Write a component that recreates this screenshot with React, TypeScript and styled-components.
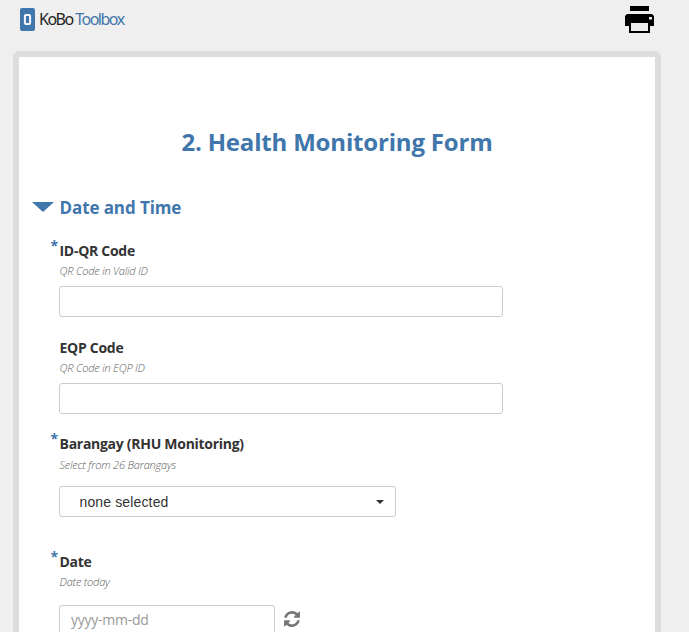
import React from "react";
import styled, { createGlobalStyle } from "styled-components";

const blue = "#3f76ab";

const GlobalStyle = createGlobalStyle`
  *, *::before, *::after { box-sizing: border-box; }
  html, body { margin: 0; height: 100%; overflow: hidden; }
  body { background: #efefef; color: #333; font-family: "Open Sans", sans-serif; }
`;

const Page = styled.div`
  width: 689px;
  height: 632px;
  overflow: hidden;
  background: #efefef;
`;

const Header = styled.header`
  display: flex;
  justify-content: space-between;
  align-items: flex-start;
  height: 51px;
  padding: 6px 35px 0 20px;
`;

const Brand = styled.div`
  display: flex;
  align-items: center;
  height: 26px;
  padding-top: 1px;
`;

const BrandName = styled.span<{ $color: string; $gap: number }>`
  margin: -1px 0 0 ${(p) => p.$gap}px;
  color: ${(p) => p.$color};
  font-family: "Noto Sans", "Open Sans", sans-serif;
  font-size: 16px;
  line-height: 20px;
  letter-spacing: -1.5px;
`;

const PrintButton = styled.button`
  display: block;
  padding: 0;
  border: 0;
  background: none;
  svg { display: block; }
`;

const Paper = styled.main`
  width: 648px;
  height: 640px;
  margin-left: 13px;
  border: 6px solid #ddd;
  border-radius: 6px;
  background: #fff;
`;

const Title = styled.h1`
  margin: 0;
  padding-top: 68px;
  color: ${blue};
  font-size: 24px;
  font-weight: 700;
  line-height: 34px;
  letter-spacing: -0.18px;
  text-align: center;
`;

const SectionTitle = styled.h2`
  display: flex;
  align-items: center;
  height: 24px;
  margin: 37px 0 21px;
  padding-left: 13px;
  gap: 5.500px;
  color: ${blue};
  font-size: 17px;
  font-weight: 700;
  line-height: 24px;
  letter-spacing: -0.1px;
`;

const Arrow = styled.span`
  margin-top: -3px;
  border: 10px solid transparent;
  border-width: 10px 11px 0;
  border-top-color: ${blue};
`;

const Fields = styled.form`
  padding-left: 40px;
`;

const Field = styled.section<{ $after?: number }>`
  margin-bottom: ${(p) => p.$after ?? 0}px;
`;

const Label = styled.label`
  position: relative;
  display: block;
  padding-left: 0.5px;
  color: #333;
  font-size: 14px;
  font-weight: 700;
  line-height: 20px;
  letter-spacing: -0.28px;
`;

const Required = styled.span`
  position: absolute;
  left: -8.500px;
  top: -5px;
  color: ${blue};
  font-size: 14px;
  font-weight: 700;
`;

const Hint = styled.p<{ $before?: number; $after: number }>`
  margin: ${(p) => p.$before ?? 0}px 0 ${(p) => p.$after}px 0.5px;
  color: #5c5c5c;
  font-size: 11px;
  font-style: italic;
  font-weight: 300;
  line-height: 20px;
  letter-spacing: -0.2px;
`;

const TextInput = styled.input<{ $width: number }>`
  display: block;
  width: ${(p) => p.$width}px;
  height: 31px;
  padding: 0 11px;
  border: 1px solid #ccc;
  border-radius: 3px;
  outline: 0;
  background: #fff;
  font: 14px "Open Sans", sans-serif;
  letter-spacing: -0.25px;
  &::placeholder { color: #999; opacity: 1; }
`;

const DateInput = styled(TextInput)`
  padding-bottom: 2px;
`;

const Select = styled.button`
  display: flex;
  align-items: center;
  justify-content: space-between;
  width: 337px;
  height: 31px;
  padding: 0 11px 0 19.500px;
  border: 1px solid #ccc;
  border-radius: 3px;
  background: #fff;
  color: #333;
  font: 14px/20px "Liberation Sans", Arial, sans-serif;
  letter-spacing: 0.14px;
`;

const Caret = styled.span`
  border: 4px solid transparent;
  border-top-color: #333;
  border-bottom: 0;
`;

const DateRow = styled.div`
  display: flex;
  align-items: flex-start;
  gap: 9px;
  svg { margin-top: 6px; }
`;

const LogoMark = () => (
  <svg width="15" height="23" viewBox="0 0 15 23">
    <rect width="15" height="23" rx="2" fill={blue} />
    <rect x="4.9" y="7" width="5.2" height="9" rx="1" fill={blue} stroke="#f5f8fb" strokeWidth="2" />
  </svg>
);

const PrintIcon = () => (
  <svg width="29" height="27" viewBox="0 0 29 27">
    <path d="M5 0h19v5H5z" />
    <path d="M2 8h25l2 2v10h-4v7H4v-7H0V10z" />
    <path d="M6 17h17v8H6z" fill="#efefef" />
    <path d="M24 11h3v2.5h-3z" fill="#efefef" />
  </svg>
);

const RefreshIcon = () => (
  <svg width="16" height="16" viewBox="0 0 1536 1536" fill="#777">
    <path d="M1511 928q0 5-1 7-64 268-268 434.500T764 1536q-146 0-282.500-55T238 1324l-129 129q-19 19-45 19t-45-19-19-45V960q0-26 19-45t45-19h448q26 0 45 19t19 45-19 45l-137 137q71 66 161 102t187 36q134 0 250-65t186-179q11-17 53-117 8-23 30-23h192q13 0 22.500 9.500t9.500 22.500zm25-800v448q0 26-19 45t-45 19h-448q-26 0-45-19t-19-45 19-45l138-138Q969 256 768 256q-134 0-250 65T332 500q-11 17-53 117-8 23-30 23H50q-13 0-22.500-9.500T18 608v-7q65-268 270-434.500T768 0q146 0 284 55.500T1297 212l130-129q19-19 45-19t45 19 19 45z" />
  </svg>
);

export default function App() {
  return (
    <Page>
      <GlobalStyle />
      <Header>
        <Brand>
          <LogoMark />
          <BrandName $color="#222" $gap={4}>KoBo</BrandName>
          <BrandName $color={blue} $gap={2.5}>Toolbox</BrandName>
        </Brand>
        <PrintButton aria-label="Print"><PrintIcon /></PrintButton>
      </Header>
      <Paper>
        <Title>2. Health Monitoring Form</Title>
        <SectionTitle><Arrow />Date and Time</SectionTitle>
        <Fields>
          <Field $after={21}>
            <Label><Required>*</Required>ID-QR Code</Label>
            <Hint $after={5}>QR Code in Valid ID</Hint>
            <TextInput $width={444} />
          </Field>
          <Field $after={20}>
            <Label>EQP Code</Label>
            <Hint $after={5}>QR Code in EQP ID</Hint>
            <TextInput $width={444} />
          </Field>
          <Field $after={35}>
            <Label><Required>*</Required>Barangay (RHU Monitoring)</Label>
            <Hint $before={1} $after={11}>Select from 26 Barangays</Hint>
            <Select type="button">none selected<Caret /></Select>
          </Field>
          <Field>
            <Label><Required>*</Required>Date</Label>
            <Hint $after={13}>Date today</Hint>
            <DateRow>
              <DateInput $width={216} placeholder="yyyy-mm-dd" />
              <RefreshIcon />
            </DateRow>
          </Field>
        </Fields>
      </Paper>
    </Page>
  );
}
